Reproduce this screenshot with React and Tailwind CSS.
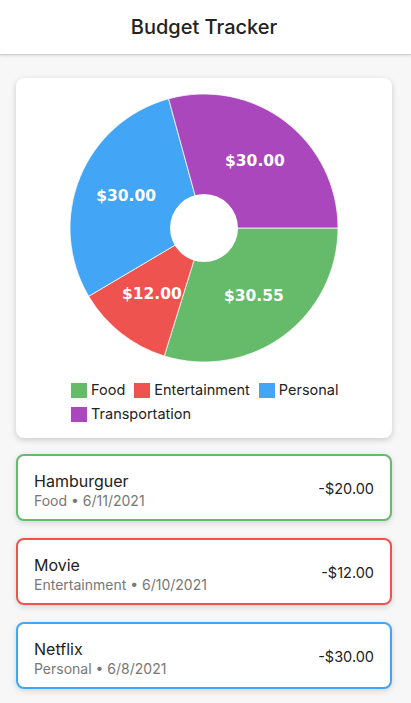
import React from 'react';

const categories = [
  { name: 'Food', color: '#66bb6a', total: 30.55 },
  { name: 'Entertainment', color: '#ef5350', total: 12 },
  { name: 'Personal', color: '#42a5f5', total: 30 },
  { name: 'Transportation', color: '#ab47bc', total: 30 },
];

const transactions = [
  { title: 'Hamburguer', category: 'Food', date: '6/11/2021', amount: 20, border: 'border-[#66bb6a]' },
  { title: 'Movie', category: 'Entertainment', date: '6/10/2021', amount: 12, border: 'border-[#ef5350]' },
  { title: 'Netflix', category: 'Personal', date: '6/8/2021', amount: 30, border: 'border-[#42a5f5]' },
];

const PieChart = () => {
  const size = 270;
  const c = size / 2;
  const r = 134;
  const inner = 34;
  const sum = categories.reduce((s, x) => s + x.total, 0);
  let start = 0;

  const point = (angle, radius) => [c + radius * Math.cos(angle), c + radius * Math.sin(angle)];

  const slices = categories.map((cat) => {
    const sweep = (cat.total / sum) * Math.PI * 2;
    const end = start + sweep;
    const [x1, y1] = point(start, r);
    const [x2, y2] = point(end, r);
    const large = sweep > Math.PI ? 1 : 0;
    const d = `M ${c} ${c} L ${x1} ${y1} A ${r} ${r} 0 ${large} 1 ${x2} ${y2} Z`;
    const [lx, ly] = point(start + sweep / 2, (r + inner) / 2);
    start = end;
    return { ...cat, d, lx, ly };
  });

  return (
    <svg width={size} height={size} viewBox={`0 0 ${size} ${size}`}>
      {slices.map((s) => (
        <path key={s.name} d={s.d} fill={s.color} stroke="#ffffff" strokeWidth="0.75" />
      ))}
      <circle cx={c} cy={c} r={inner} fill="#ffffff" />
      {slices.map((s) => (
        <text
          key={s.name + '-label'}
          x={s.lx}
          y={s.ly}
          fill="#ffffff"
          fontSize="15.5"
          fontWeight="700"
          fontFamily="'DejaVu Sans', sans-serif"
          textAnchor="middle"
          dominantBaseline="central"
        >
          ${s.total.toFixed(2)}
        </text>
      ))}
    </svg>
  );
};

const App = () => {
  return (
    <div className="min-h-[703px] bg-[#f7f7f7] font-['Inter',sans-serif] text-[#222]">
      <header className="h-[55px] bg-white border-b border-[#cfcfcf] shadow-[0_1px_3px_rgba(0,0,0,0.12)] flex items-center justify-center pr-[3px]">
        <h1 className="text-[20px] font-medium text-[#222]">Budget Tracker</h1>
      </header>

      <main className="w-[408px] px-4 pt-[23px] pb-4">
        <div className="bg-white rounded-lg shadow-[0_2px_6px_rgba(0,0,0,0.18)] pt-[15px] pb-4 flex flex-col items-center">
          <PieChart />
          <div className="w-[270px] mt-[19px] flex flex-wrap gap-x-[9px] gap-y-[8px] pl-[2px]">
            {categories.map((cat) => (
              <div key={cat.name} className="flex items-center gap-[4px] h-[16px]">
                <span className="w-4 h-[15px]" style={{ backgroundColor: cat.color }} />
                <span className="text-[14.5px] leading-4 text-[#222]">{cat.name}</span>
              </div>
            ))}
          </div>
        </div>

        <div className="mt-4 flex flex-col gap-[17px]">
          {transactions.map((t) => (
            <div
              key={t.title}
              className={`h-[67px] bg-white rounded-lg border-2 ${t.border} shadow-[0_2px_6px_rgba(0,0,0,0.14)] px-4 flex items-center justify-between`}
            >
              <div className="flex flex-col pt-[7px]">
                <span className="text-[16px] leading-[19px] text-[#222]">{t.title}</span>
                <span className="text-[14px] leading-[19px] text-[#777]">
                  {t.category} • {t.date}
                </span>
              </div>
              <span className="pt-[3px] text-[14.5px] text-[#222]">-${t.amount.toFixed(2)}</span>
            </div>
          ))}
        </div>
      </main>
    </div>
  );
};

export default App;
